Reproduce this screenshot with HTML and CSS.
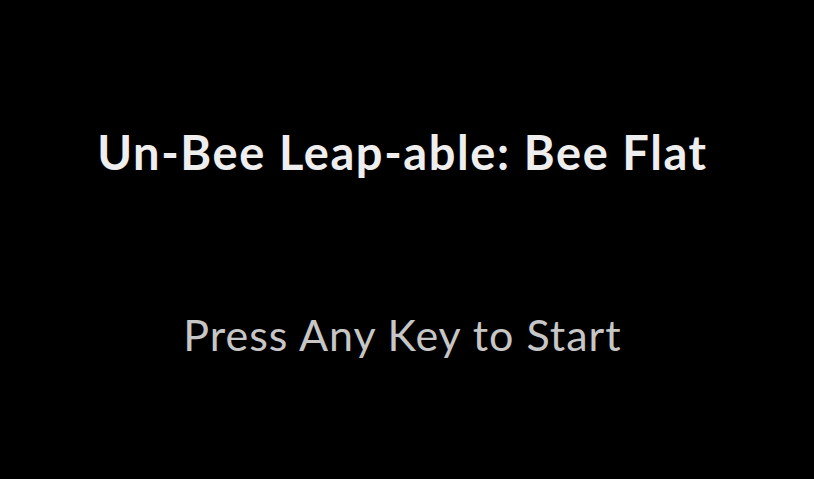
FILE: index.html
```html
<!DOCTYPE html>
<html>
<head>
<meta charset="utf-8">
<link rel="stylesheet" href="styles.css">
</head>
<body>
<div class="screen">
  <h1 class="title">Un-Bee Leap-able: Bee Flat</h1>
  <p class="prompt">Press Any Key to Start</p>
</div>
</body>
</html>
```
FILE: styles.css
```css
html, body {
  margin: 0;
  padding: 0;
  background: #000;
  height: 100%;
  overflow: hidden;
}
.screen {
  width: 805px;
  height: 479px;
  display: flex;
  flex-direction: column;
  align-items: center;
  font-family: "Lato", "Open Sans", sans-serif;
}
.title {
  margin: 124px 0 0 0;
  font-size: 47px;
  line-height: 56px;
  font-weight: 700;
  letter-spacing: 1.6px;
  color: #eeeeee;
}
.prompt {
  margin: 129px 0 0 0;
  font-size: 43px;
  line-height: 52px;
  font-weight: 400;
  letter-spacing: 1px;
  color: #c6c6c6;
}
```
